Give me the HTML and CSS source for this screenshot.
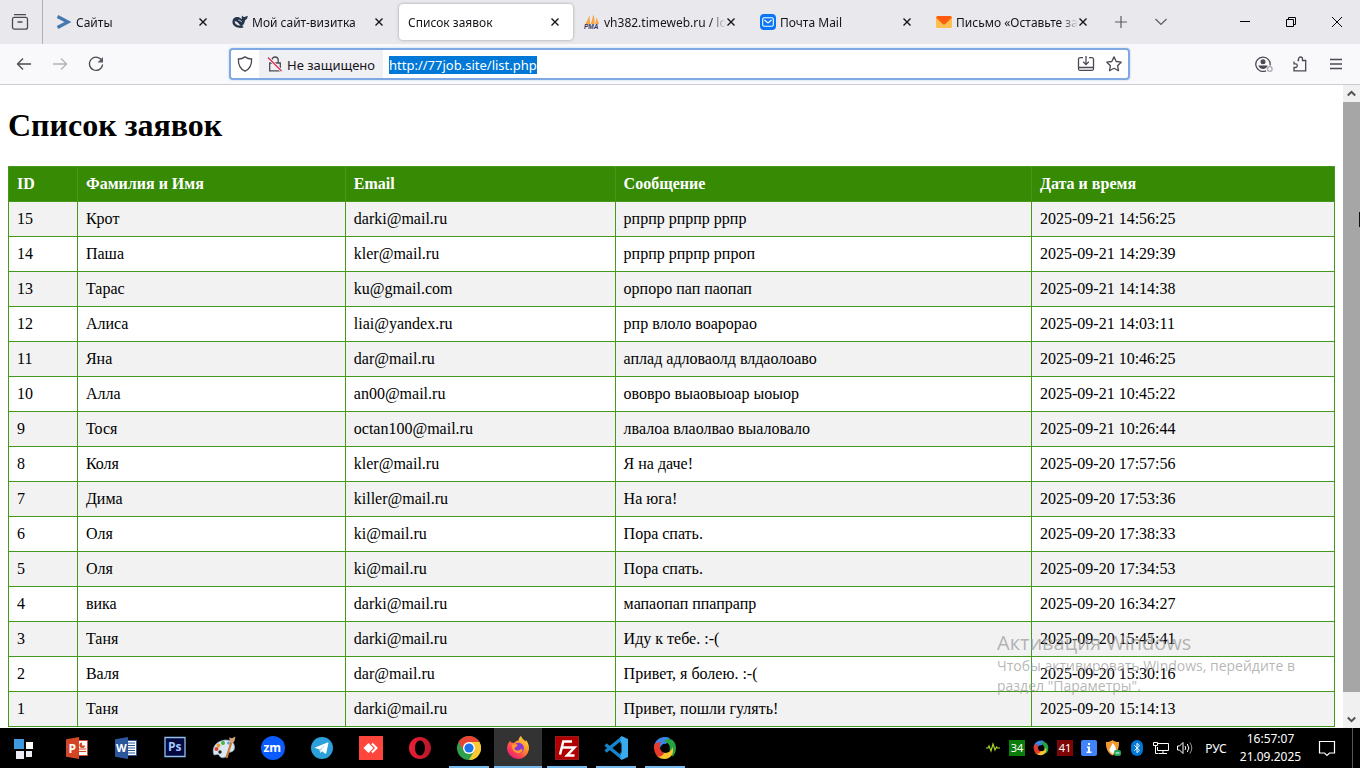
FILE: index.html
```html
<!DOCTYPE html>
<html lang="ru">
<head>
<meta charset="utf-8">
<title>Список заявок</title>
<link rel="stylesheet" href="styles.css">
</head>
<body>
<header class="tabstrip">
  <button class="overview" aria-label="Недавние вкладки"><svg width="18" height="18" viewBox="0 0 18 18" fill="none" stroke="#4a4a52" stroke-width="1.3"><path d="M3.5 1.7h11M3 4.3h12a1.8 1.8 0 0 1 1.5 1.7v8.200a2 2 0 0 1-2 2h-11a2 2 0 0 1-2-2V6A1.800 1.800 0 0 1 3 4.300zM7 9h4" stroke-linecap="round"/></svg></button>
  <nav class="tabs">
    <div class="tab"><svg class="favicon" viewBox="0 0 16 16"><path d="M1.500 2.500L12 8 1.500 13.500" fill="none" stroke="#4379b0" stroke-width="3.200"/></svg><span class="tab-title">Сайты</span><button class="tab-close" aria-label="Закрыть"><svg width="8" height="8" viewBox="0 0 8 8"><path d="M.5.5l7 7m0-7l-7 7"/></svg></button></div>
    <div class="tab"><svg class="favicon" viewBox="0 0 16 16"><path d="M.5 7C1 3.500 4 2.300 7 3.300c1.200.4 1.800 1.700 3 2C9.500 4 9.600 2.600 10.200 1.500c.7 1.300 1.600 1.800 2.800 1.300 1-.4 1.800-.6 2.800-.8-.2 2.200-1.200 3.600-2.800 4.200-.2 2.600-1.200 4.400-2.800 5.600l1.600 1.400c-1.800.8-4 .9-6 .3C2.500 12.700 0 10.500.5 7z" fill="#27364d"/><path d="M2.600 7.200c1.600-.4 3.100 1 4.200 2.500.6.9 1.200 1.500 2 1.700-2.300.6-5.700-.5-6.200-4.200z" fill="#e9e9ed"/><path d="M6.500 6.300c1.500-.3 2.500.5 2.800 1.700" fill="none" stroke="#e9e9ed"/></svg><span class="tab-title">Мой сайт-визитка</span><button class="tab-close" aria-label="Закрыть"><svg width="8" height="8" viewBox="0 0 8 8"><path d="M.5.5l7 7m0-7l-7 7"/></svg></button></div>
    <div class="tab tab-active"><span class="tab-title">Список заявок</span><button class="tab-close" aria-label="Закрыть"><svg width="8" height="8" viewBox="0 0 8 8"><path d="M.5.5l7 7m0-7l-7 7"/></svg></button></div>
    <div class="tab"><svg class="favicon" viewBox="0 0 16 16"><path d="M1 10.500C3 7 4.500 4 5.500 1l.5 9zM6.500 10C8 7 8.500 4 9 0.500c1.500 3 2 6 1.500 9.500zM11 10c1-2 1.200-4 1-6.500 1.500 2 2.500 4.500 3 6.500z" fill="#f7a545"/><text x="0" y="15" font-size="6.500" font-weight="bold" font-style="italic" font-family="Liberation Sans, sans-serif" fill="#34345f">PMA</text></svg><span class="tab-title">vh382.timeweb.ru / localhost</span><button class="tab-close" aria-label="Закрыть"><svg width="8" height="8" viewBox="0 0 8 8"><path d="M.5.5l7 7m0-7l-7 7"/></svg></button></div>
    <div class="tab"><svg class="favicon" viewBox="0 0 16 16"><rect width="16" height="16" rx="4" fill="#0b76f5"/><rect x="2.700" y="3.700" width="10.600" height="8.600" rx="1.500" fill="none" stroke="#fff" stroke-width="1.100"/><path d="M4.500 6L8 9l3.500-3" fill="none" stroke="#fff" stroke-width="1.200"/></svg><span class="tab-title">Почта Mail</span><button class="tab-close" aria-label="Закрыть"><svg width="8" height="8" viewBox="0 0 8 8"><path d="M.5.5l7 7m0-7l-7 7"/></svg></button></div>
    <div class="tab"><svg class="favicon" viewBox="0 0 16 16"><rect y="2" width="16" height="12" rx="1.500" fill="#ffc04d"/><path d="M1.500 2h13L16 3.500 9 10.200q-1 .8-2 0L0 3.500z" fill="#ff5b10"/></svg><span class="tab-title">Письмо «Оставьте заявку»</span><button class="tab-close" aria-label="Закрыть"><svg width="8" height="8" viewBox="0 0 8 8"><path d="M.5.5l7 7m0-7l-7 7"/></svg></button></div>
  </nav>
  <button class="strip-button" aria-label="Новая вкладка"><svg width="12" height="12" viewBox="0 0 12 12"><path d="M6 0v12M0 6h12"/></svg></button>
  <button class="strip-button" aria-label="Список вкладок"><svg width="12" height="8" viewBox="0 0 12 8"><path d="M.5 1L6 6.500 11.500 1"/></svg></button>
  <div class="window-controls">
    <button aria-label="Свернуть"><svg width="10" height="10" viewBox="0 0 10 10"><path d="M0 4.500h10"/></svg></button>
    <button aria-label="Восстановить"><svg width="10" height="10" viewBox="0 0 10 10"><path d="M.5 2.500h7v7h-7zM2.500 2.500v-2h7v7h-2"/></svg></button>
    <button aria-label="Закрыть окно"><svg width="10" height="10" viewBox="0 0 10 10"><path d="M0 0l10 10M10 0L0 10"/></svg></button>
  </div>
</header>

<div class="toolbar">
  <div class="nav-buttons">
    <button aria-label="Назад"><svg width="16" height="16" viewBox="0 0 16 16"><path d="M15 8H1.500M7 2.500L1.500 8 7 13.500"/></svg></button>
    <button class="dim" aria-label="Вперёд" disabled><svg width="16" height="16" viewBox="0 0 16 16"><path d="M1 8h13.500M9 2.500L14.500 8 9 13.500"/></svg></button>
    <button aria-label="Обновить"><svg width="16" height="16" viewBox="0 0 16 16"><path d="M14 5A6.600 6.600 0 1 0 14.600 8.500"/><path d="M15 1v5.500H9.500z" fill="#5b5b63" stroke="none"/></svg></button>
  </div>
  <div class="urlbar">
    <button class="shield" aria-label="Защита"><svg width="16" height="16" viewBox="0 0 16 16"><path d="M8 .9C10 2.300 12 3 14.600 3c.3 5.500-1.600 9.800-6.600 12.200C3 12.800 1.100 8.500 1.400 3 4 3 6 2.300 8 .9z"/></svg></button>
    <button class="security"><svg width="16" height="16" viewBox="0 0 16 16"><path d="M4.800 7V4.200a3.200 3.200 0 0 1 6.400 0V7M2.700 7h10.600v7.800H2.700z"/><path d="M1 1.500L14.500 15" stroke="#f0f0f4" stroke-width="3"/><path d="M1 1.500L14.500 15" stroke="#e22850" stroke-width="1.200"/></svg><span>Не защищено</span></button>
    <input class="url" id="url" type="text" aria-label="Адрес" value="http://77job.site/list.php" spellcheck="false">
    <button class="url-action" aria-label="Установить"><svg width="18" height="16" viewBox="0 0 18 16"><path d="M6 1.700H3a1.500 1.500 0 0 0-1.500 1.500v9.600A1.500 1.500 0 0 0 3 14.300h12a1.500 1.500 0 0 0 1.500-1.500V3.200A1.500 1.500 0 0 0 15 1.700h-3M9 0v8M6.200 5.800L9 8.600l2.800-2.800M1.500 11.500h15"/></svg></button>
    <button class="url-action" aria-label="В закладки"><svg width="16" height="16" viewBox="0 0 16 16"><path d="M8 .9l2.200 4.600 5 .7-3.600 3.500.9 5L8 12.300l-4.500 2.400.9-5L.8 6.200l5-.7z" stroke-linejoin="round"/></svg></button>
  </div>
  <div class="menu-buttons">
    <button aria-label="Аккаунт"><svg width="18" height="16" viewBox="0 0 18 16"><path d="M11 14.800A7.200 7.200 0 1 1 15.100 9.500"/><circle cx="8" cy="5.700" r="2.500" fill="#4a4a52" stroke="none"/><path d="M3.500 9.500h9v.5c-1 2-2.500 3-4.500 3s-3.500-1-4.500-3z" fill="#4a4a52" stroke="none"/><circle cx="14.800" cy="13" r="2.300" stroke="#aaaab0"/></svg></button>
    <button aria-label="Расширения"><svg width="16" height="16" viewBox="0 0 16 16"><path d="M5.500 4.500h1V3a2 2 0 0 1 4 0v1.500h3.200v10.300H2v-3.300h1.500a1.800 1.800 0 0 0 0-3.600H2V5.500"/></svg></button>
    <button aria-label="Меню"><svg width="12" height="12" viewBox="0 0 12 12"><path d="M0 1.500h12M0 6h12M0 10.500h12"/></svg></button>
  </div>
</div>

<div class="viewport">
  <main class="page">
    <h1>Список заявок</h1>
    <table class="requests">
      <colgroup><col class="col-id"><col class="col-name"><col class="col-email"><col class="col-message"><col class="col-date"></colgroup>
      <thead><tr><th>ID</th><th>Фамилия и Имя</th><th>Email</th><th>Сообщение</th><th>Дата и время</th></tr></thead>
      <tbody>
        <tr><td>15</td><td>Крот</td><td>darki@mail.ru</td><td>рпрпр рпрпр ррпр</td><td>2025-09-21 14:56:25</td></tr>
        <tr><td>14</td><td>Паша</td><td>kler@mail.ru</td><td>рпрпр рпрпр рпроп</td><td>2025-09-21 14:29:39</td></tr>
        <tr><td>13</td><td>Тарас</td><td>ku@gmail.com</td><td>орпоро пап паопап</td><td>2025-09-21 14:14:38</td></tr>
        <tr><td>12</td><td>Алиса</td><td>liai@yandex.ru</td><td>рпр влоло воарорао</td><td>2025-09-21 14:03:11</td></tr>
        <tr><td>11</td><td>Яна</td><td>dar@mail.ru</td><td>аплад адловаолд влдаолоаво</td><td>2025-09-21 10:46:25</td></tr>
        <tr><td>10</td><td>Алла</td><td>an00@mail.ru</td><td>ововро выаовыоар ыоыор</td><td>2025-09-21 10:45:22</td></tr>
        <tr><td>9</td><td>Тося</td><td>octan100@mail.ru</td><td>лвалоа влаолвао выаловало</td><td>2025-09-21 10:26:44</td></tr>
        <tr><td>8</td><td>Коля</td><td>kler@mail.ru</td><td>Я на даче!</td><td>2025-09-20 17:57:56</td></tr>
        <tr><td>7</td><td>Дима</td><td>killer@mail.ru</td><td>На юга!</td><td>2025-09-20 17:53:36</td></tr>
        <tr><td>6</td><td>Оля</td><td>ki@mail.ru</td><td>Пора спать.</td><td>2025-09-20 17:38:33</td></tr>
        <tr><td>5</td><td>Оля</td><td>ki@mail.ru</td><td>Пора спать.</td><td>2025-09-20 17:34:53</td></tr>
        <tr><td>4</td><td>вика</td><td>darki@mail.ru</td><td>мапаопап ппапрапр</td><td>2025-09-20 16:34:27</td></tr>
        <tr><td>3</td><td>Таня</td><td>darki@mail.ru</td><td>Иду к тебе. :-(</td><td>2025-09-20 15:45:41</td></tr>
        <tr><td>2</td><td>Валя</td><td>dar@mail.ru</td><td>Привет, я болею. :-(</td><td>2025-09-20 15:30:16</td></tr>
        <tr><td>1</td><td>Таня</td><td>darki@mail.ru</td><td>Привет, пошли гулять!</td><td>2025-09-20 15:14:13</td></tr>
      </tbody>
    </table>
  </main>
  <div class="scrollbar">
    <button aria-label="Вверх"><svg width="9" height="7" viewBox="0 0 9 7"><path d="M.8 5.500l3.700-3.700 3.700 3.700"/></svg></button>
    <div class="thumb"></div>
    <div class="track"></div>
    <button aria-label="Вниз"><svg width="9" height="7" viewBox="0 0 9 7"><path d="M.8 1.500l3.700 3.700 3.700-3.700"/></svg></button>
    <i class="pointer"></i>
  </div>
  <aside class="activation">
    <p class="activation-title">Активация Windows</p>
    <p>Чтобы активировать Windows, перейдите в<br>раздел "Параметры".</p>
  </aside>
</div>

<footer class="taskbar">
  <button class="task start" aria-label="Пуск"><svg width="24" height="24" viewBox="0 0 24 24"><path fill="#3f97e0" d="M2 3h10v10H2z"/><path fill="#fff" d="M14 6h7v7h-7z"/><path fill="#eceaf4" d="M4 15h8v8H4zM14 15h6v6h-6z"/></svg></button>
  <button class="task" aria-label="PowerPoint"><svg width="24" height="24" viewBox="0 0 24 24"><path fill="#fff" stroke="#d24726" d="M12.500 4.500h10v15h-10z"/><path d="M14 13h7M14 15.500h7" stroke="#d24726"/><path d="M17 6.500a2.800 2.800 0 1 0 3 3h-3z" fill="#d24726"/><path fill="#d24625" d="M1 3.300L14 1v22L1 20.700z"/><text x="3.500" y="16.500" font-size="12" font-weight="bold" fill="#fff">P</text></svg></button>
  <button class="task" aria-label="Word"><svg width="24" height="24" viewBox="0 0 24 24"><path fill="#fff" stroke="#2b579a" d="M12.500 4.500h10v15h-10z"/><path d="M14 7h7M14 9.500h7M14 12h7M14 14.500h7M14 17h7" stroke="#2b579a"/><path fill="#2b579a" d="M1 3.300L14 1v22L1 20.700z"/><text x="2" y="16" font-size="11" font-weight="bold" fill="#fff">W</text></svg></button>
  <button class="task" aria-label="Photoshop"><svg width="24" height="24" viewBox="0 0 24 24"><path fill="#05073f" stroke="#8fc0ef" stroke-width="1.300" d="M2 1.500h20v19H2z"/><text x="5" y="15" font-size="12" font-weight="bold" fill="#9fcafb">Ps</text></svg></button>
  <button class="task" aria-label="Paint"><svg width="24" height="24" viewBox="0 0 24 24"><path fill="#dbe8f3" stroke="#86a3bf" stroke-width=".7" d="M2 19C-1 12 4 5 13 4c6-.5 10 3 9.500 8-.3 4-4 4-6 4.500-2 .7-1 3-3 4.500-2 1.300-5 1-6-1-1-2.500-2.500-1.500-5.500-1z"/><circle cx="4.500" cy="13" r="2" fill="#d44435"/><circle cx="6.500" cy="9.500" r="2" fill="#e79e37"/><circle cx="11" cy="7" r="2" fill="#48b340"/><circle cx="16.500" cy="7" r="1.500" fill="#6b9bd6"/><circle cx="8" cy="16" r="1.700" fill="#222"/><path d="M20 4l-5.500 18" stroke="#c97b36" stroke-width="2.200"/><path d="M17 1.500l3 .8 3.500-1.800-1 4.500-2 2.500-2-1z" fill="#d3a477"/></svg></button>
  <button class="task" aria-label="Zoom"><svg width="24" height="24" viewBox="0 0 24 24"><circle cx="12" cy="12" r="12" fill="#0b5cff"/><text x="2.500" y="16" font-size="12" font-weight="bold" fill="#fff">zm</text></svg></button>
  <button class="task" aria-label="Telegram"><svg width="24" height="24" viewBox="0 0 24 24"><circle cx="12" cy="12" r="11" fill="#2ba0da"/><path fill="#fff" d="M4.500 11.700l13-5.200c.7-.2 1 .2.900.8L16.300 17c-.2.800-.7.900-1.300.5l-3-2.200-1.800 1.700-.6-3.500z"/><path d="M9.500 13.400L15.500 8.800l-4.700 5.400-.6 2.800z" fill="#a9d5ee"/></svg></button>
  <button class="task" aria-label="AnyDesk"><svg width="24" height="24" viewBox="0 0 24 24"><path fill="#ff463c" d="M0 0h24v24H0z"/><path fill="#fff" d="M4.500 12L9.500 7l5 5-5 5z"/><path d="M13 7.500l4.500 4.500-4.500 4.500" fill="none" stroke="#fff" stroke-width="2"/></svg></button>
  <button class="task" aria-label="Opera"><svg width="24" height="24" viewBox="0 0 24 24"><defs><linearGradient id="op" x1="0" y1="0" x2="1" y2="0"><stop offset="0" stop-color="#ee2136"/><stop offset="1" stop-color="#b51628"/></linearGradient></defs><path fill="url(#op)" fill-rule="evenodd" d="M12 1a11 11 0 1 0 0 22 11 11 0 1 0 0-22zm0 3.500c3 0 5 3.500 5 7.500s-2 7.500-5 7.500-5-3.500-5-7.500 2-7.500 5-7.500z"/></svg></button>
  <button class="task running" aria-label="Chrome"><svg width="24" height="24" viewBox="0 0 24 24"><circle cx="12" cy="12" r="12" fill="#2ca24c"/><path fill="#e84435" d="M1.600 6A12 12 0 0 1 22.400 6H12v6l-5.200 3z"/><path fill="#fcc934" d="M22.400 6A12 12 0 0 1 12 24l5.200-9L12 6z"/><circle cx="12" cy="12" r="6" fill="#fff"/><circle cx="12" cy="12" r="4.600" fill="#1a73e8"/></svg></button>
  <button class="task running current" aria-label="Firefox"><svg width="24" height="24" viewBox="0 0 24 24"><defs><linearGradient id="fx" x1="1" y1="0" x2=".2" y2="1"><stop offset="0" stop-color="#fff04a"/><stop offset=".4" stop-color="#ff9a2c"/><stop offset=".75" stop-color="#ff3d52"/><stop offset="1" stop-color="#e51a80"/></linearGradient></defs><path fill="url(#fx)" d="M4 5c.8.5 1.500 1.200 1.800 2 1-.5 2-.7 3-.6C10 5 11 4.500 12.500 4.500c.3-2 1-3.500 2.500-4.500 1 3 3 3.500 4.500 5.500L20 4c2 2.500 3.500 6 2.800 10A11 11 0 0 1 1 12c0-3 1.300-5 3-7z"/><circle cx="12.500" cy="12" r="5.300" fill="#8938d6"/><path d="M6 9c2-1.500 4-.8 6 0-1 2-3 1.500-3.500 3.500C9 15.500 14 15 15.500 12.500 18 15 14 18 11 17c-3-.8-5.500-4-5-8z" fill="#ff9b2b"/></svg></button>
  <button class="task running" aria-label="FileZilla"><svg width="24" height="24" viewBox="0 0 24 24"><path fill="#b00000" stroke="#d43a3a" stroke-dasharray="1 1" d="M.5.5h23v23H.500z"/><path d="M5 18.500L8.300 5.500H17M7 11.500h6M12.500 11.500h7l-7.500 8h7.500" fill="none" stroke="#fff" stroke-width="2.500"/></svg></button>
  <button class="task running" aria-label="VS Code"><svg width="24" height="24" viewBox="0 0 24 24"><path d="M1.500 8.500L18 22M1.500 15.500L18 2" stroke="#1684ca" stroke-width="3.500"/><path fill="#38aaf0" d="M17.500 0L24 3v18l-6.500 3-1-1.500v-21z"/><path fill="#000" d="M17.500 7v10L11 12z"/></svg></button>
  <button class="task running" aria-label="Просмотр"><svg width="24" height="24" viewBox="0 0 24 24"><path d="M1 10A11 11 0 0 1 17 2.200L13 8A5 5 0 0 0 7 12z" fill="#3d84e8"/><path d="M11 5C16 .5 23 4 23 12c0 4-1.500 7-4 8.800L16.500 14C18 10 15 6.500 11 5z" fill="#25a244"/><path d="M19.500 11c2 6-1.500 12-8 12-3 0-5.500-1-7.500-3l6-3.500c4 1.500 8.500-1 9.500-5.500z" fill="#fbc52c"/><path d="M1 9c2-2 4-3 7-2.500C5.500 9.500 6.500 14 11 17.500c-1.500 2.500-4 3.500-6.500 3C2 18 .5 14 1 9z" fill="#e5392b"/></svg></button>

  <div class="tray">
    <button class="tray-item" aria-label="Монитор"><svg width="16" height="16" viewBox="0 0 16 16"><path d="M1 8h2l1-2 2 5 2-7 2 6 1.500-3 1 1H15" fill="none" stroke="#a5d52b" stroke-width="1.200"/></svg></button>
    <button class="tray-item"><span class="temp temp-green">34</span></button>
    <button class="tray-item" aria-label="Просмотр"><svg width="16" height="16" viewBox="0 0 24 24"><path d="M1 10A11 11 0 0 1 17 2.200L13 8A5 5 0 0 0 7 12z" fill="#3d84e8"/><path d="M11 5C16 .5 23 4 23 12c0 4-1.500 7-4 8.800L16.500 14C18 10 15 6.500 11 5z" fill="#25a244"/><path d="M19.500 11c2 6-1.500 12-8 12-3 0-5.500-1-7.500-3l6-3.500c4 1.500 8.500-1 9.500-5.500z" fill="#fbc52c"/><path d="M1 9c2-2 4-3 7-2.500C5.500 9.500 6.500 14 11 17.500c-1.500 2.500-4 3.500-6.500 3C2 18 .5 14 1 9z" fill="#e5392b"/></svg></button>
    <button class="tray-item"><span class="temp temp-red">41</span></button>
    <button class="tray-item" aria-label="Сведения"><svg width="16" height="16" viewBox="0 0 16 16"><rect width="16" height="16" rx="2" fill="#4183fa"/><path d="M7 3h2v2H7zM6 6.500h3v5h1.500V13h-5v-1.500H7V8H6z" fill="#fff"/></svg></button>
    <button class="tray-item" aria-label="Защита"><svg width="16" height="16" viewBox="0 0 16 16"><path d="M1 2c3 0 4.500-.5 6.500-2C9.500 1.500 11 2 14 2c.3 6-1.500 11-6.500 13.500C2.500 13 .7 8 1 2z" fill="#f29a2e"/><path d="M7.500 3c3 3 4 5 3 8l-3 3-3-3c-.5-3 2-4 3-8z" fill="#fff"/><rect x="9" y="10" width="7" height="6" rx="2" fill="#24a35a"/><path d="M10.500 13h4" stroke="#fff"/></svg></button>
    <button class="tray-item" aria-label="Bluetooth"><svg width="16" height="16" viewBox="0 0 16 16"><rect x="2" width="12" height="16" rx="6" fill="#0078d7"/><path d="M5.300 5.300l5.200 5L8 12.700V3.300l2.500 2.400-5.200 5" fill="none" stroke="#fff"/></svg></button>
    <button class="tray-item" aria-label="Сеть"><svg width="16" height="16" viewBox="0 0 16 16" fill="none" stroke="#fff"><path d="M5 3.500h10.500v7h-11V7M10 10.500v3M6 13.500h8M.5 2.500h4v3h-4zM2.500 5.500v8h3"/></svg></button>
    <button class="tray-item" aria-label="Громкость"><svg width="16" height="16" viewBox="0 0 16 16" fill="none" stroke="#fff"><path d="M.5 6h2L6 2.500v11L2.500 10h-2zM8 6q1.500 2 0 4M10.300 4q3 4 0 8"/><path d="M12.800 2.500q4 5.500 0 11" stroke="#999"/></svg></button>
    <button class="language">РУС</button>
    <button class="clock"><time>16:57:07</time><time>21.09.2025</time></button>
    <button class="notices" aria-label="Уведомления"><svg width="18" height="18" viewBox="0 0 18 18"><path d="M1.500 2.500h15v11.500h-5L9 16.500 6.500 14h-5z" fill="none" stroke="#fff" stroke-width="1.200"/></svg></button>
    <button class="desktop" aria-label="Свернуть все окна"></button>
  </div>
</footer>
<script src="script.js"></script>
</body>
</html>
```

FILE: styles.css
```css
* { box-sizing: border-box; }

body {
  margin: 0;
  height: 100vh;
  display: flex;
  flex-direction: column;
  overflow: hidden;
  background: #fff;
  font-family: "Noto Sans", "Open Sans", sans-serif;
  font-size: 12px;
  color: #15141a;
}

button {
  border: 0;
  padding: 0;
  margin: 0;
  background: none;
  font: inherit;
  color: inherit;
  display: flex;
  align-items: center;
  justify-content: center;
}

svg { flex: none; display: block; }

/* Tab strip */
.tabstrip {
  flex: none;
  height: 44px;
  display: flex;
  align-items: stretch;
  background: #e9e9ed;
}
.overview { width: 43px; border-right: 1px solid #b0b0b5; padding-right: 2px; }
.tabs { display: flex; gap: 2px; padding: 4px 0 4px 4px; }
.tab {
  width: 174px;
  display: flex;
  align-items: center;
  padding: 0 14px 0 9px;
  border-radius: 4px;
}
.tab-active { background: #fff; box-shadow: 0 0 3px rgba(0, 0, 0, .35); }
.favicon { width: 16px; height: 16px; margin-right: 4px; }
.tab-title {
  flex: 1;
  min-width: 0;
  overflow: hidden;
  white-space: nowrap;
  padding-top: 2px;
  line-height: 16px;
  mask-image: linear-gradient(to left, transparent, #000 16px);
}
.tab-close { width: 8px; height: 16px; margin-left: 1px; }
.tab-close svg { stroke: #15141a; stroke-width: 1.4; }
.strip-button { width: 40px; }
.strip-button svg { fill: none; stroke: #5b5b63; stroke-width: 1.2; }
.window-controls { display: flex; margin-left: auto; }
.window-controls button { width: 46px; }
.window-controls svg { fill: none; stroke: #000; }

/* Toolbar */
.toolbar {
  flex: none;
  height: 41px;
  display: flex;
  align-items: center;
  background: #f9f9fb;
  border-bottom: 1px solid #ccccd1;
}
.toolbar svg { fill: none; stroke: #4a4a52; stroke-width: 1.3; }
.nav-buttons { width: 229px; display: flex; padding-left: 6px; }
.nav-buttons button { width: 36px; height: 32px; }
.dim { opacity: .4; }
.urlbar {
  flex: 1;
  height: 32px;
  display: flex;
  align-items: center;
  background: #fff;
  border: 2px solid #7fa9e2;
  border-radius: 4px;
  box-shadow: 0 0 2px #a9c5ec;
}
.shield { width: 28px; height: 28px; }
.security {
  height: 28px;
  gap: 4px;
  padding: 0 8px;
  background: #f0f0f4;
  font-size: 13px;
  line-height: 18px;
}
.security span { padding-top: 2px; }
.url {
  flex: 1;
  min-width: 0;
  height: 20px;
  border: 0;
  outline: 0;
  padding: 2px 0 0;
  margin-left: 6px;
  background: transparent;
  font: 13px/18px "Noto Sans", "Open Sans", sans-serif;
}
.url::selection { background: #0078d7; color: #fff; }
.url-action { width: 28px; height: 28px; }
.menu-buttons { width: 230px; display: flex; justify-content: flex-end; padding-right: 6px; }
.menu-buttons button { width: 36px; height: 32px; }

/* Page */
.viewport { flex: 1; min-height: 0; display: flex; position: relative; }
.page {
  flex: 1;
  min-width: 0;
  overflow: hidden;
  padding: 0 8px;
  font-family: "Liberation Serif", serif;
  font-size: 16px;
  line-height: 18px;
  color: #000;
}
.page h1 { margin: 22px 0; font-size: 32px; line-height: 37px; }
.requests { width: 100%; table-layout: fixed; border-collapse: collapse; }
.requests th, .requests td { border: 1px solid #459a1d; padding: 8px; text-align: left; }
.requests th { background: #368a04; color: #fff; }
.requests tbody tr:nth-child(odd) { background: #f2f2f2; }
.col-id { width: 5.2%; }
.col-name { width: 20.2%; }
.col-email { width: 20.35%; }
.col-message { width: 31.4%; }
.col-date { width: 22.85%; }

.scrollbar {
  width: 17px;
  display: flex;
  flex-direction: column;
  position: relative;
  background: #f0f0f0;
}
.scrollbar button { height: 17px; }
.scrollbar svg { fill: none; stroke: #505050; stroke-width: 2; }
.thumb { flex: 590; background: #a6a6a6; }
.track { flex: 19; }
.pointer { position: absolute; right: 0; top: 127px; width: 1px; height: 15px; background: #111; }

.activation {
  position: absolute;
  right: 40px;
  bottom: 32px;
  width: 323px;
  pointer-events: none;
  color: rgba(150, 150, 150, .7);
  font-family: "Open Sans", "Noto Sans", sans-serif;
  font-size: 14px;
  line-height: 20px;
  white-space: nowrap;
}
.activation p { margin: 0; }
.activation .activation-title { font-size: 20px; line-height: 26px; }

/* Taskbar */
.taskbar {
  flex: none;
  height: 40px;
  display: flex;
  gap: 1px;
  background: #000;
  color: #fff;
}
.taskbar text { font-family: "Open Sans", sans-serif; }
.task { width: 48px; height: 40px; position: relative; }
.start { margin-right: 4px; }
.running::after {
  content: "";
  position: absolute;
  left: 4px;
  right: 4px;
  bottom: 0;
  height: 2px;
  background: #76b9ed;
}
.current { background: #333; }
.current::after { left: 0; right: 0; }
.tray { margin-left: auto; display: flex; }
.tray-item { width: 24px; }
.temp { width: 16px; height: 16px; font-size: 11px; line-height: 16px; }
.temp-green { background: #0a7d0a; }
.temp-red { background: #7d0505; }
.language { width: 38px; }
.clock { width: 71px; flex-direction: column; line-height: 18px; }
.notices { width: 42px; }
.desktop { width: 8px; margin-left: 4px; border-left: 1px solid #555; }
```

FILE: script.js
```js
const url = document.getElementById("url");
url.focus();
url.select();
```
